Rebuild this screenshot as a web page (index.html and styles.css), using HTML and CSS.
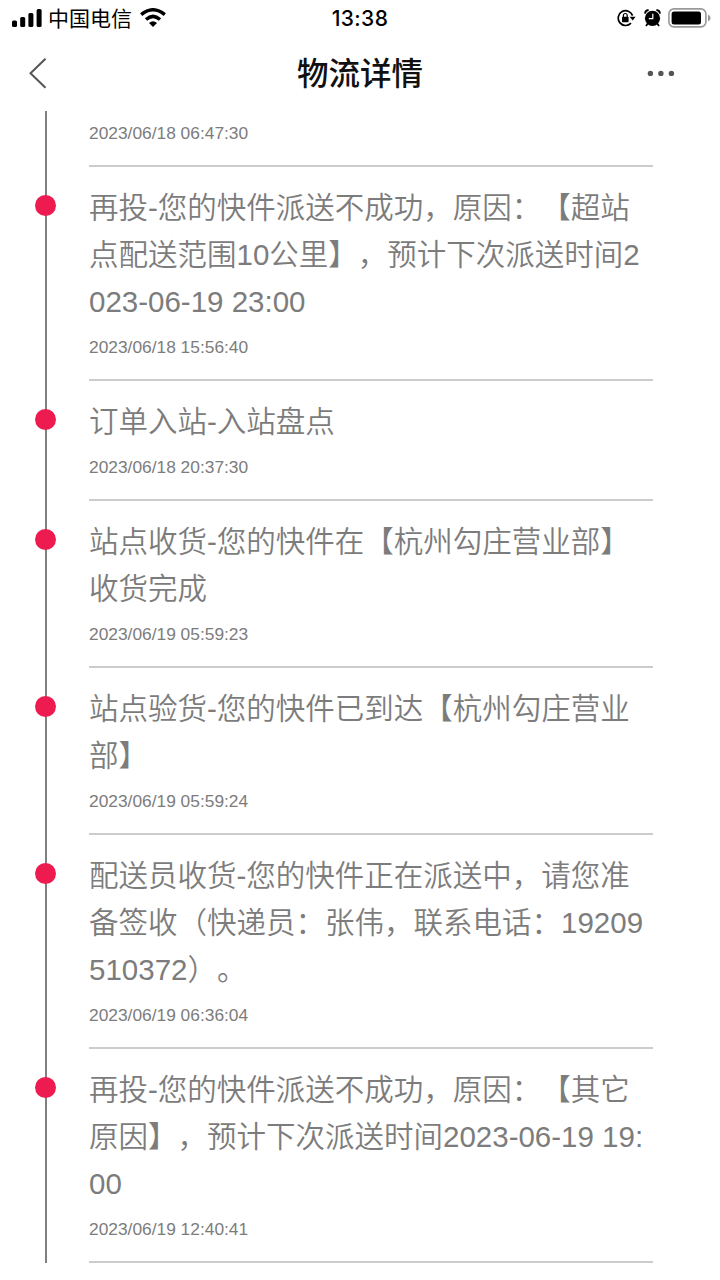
FILE: index.html
```html
<!DOCTYPE html>
<html lang="zh-CN">
<head>
<meta charset="utf-8">
<title>物流详情</title>
<link rel="stylesheet" href="styles.css">
</head>
<body>
<div class="status">
  <div class="status-left">
    <svg class="signal" width="31" height="20" viewBox="0 0 31 20"><rect x="0" y="12.5" width="5" height="6.5" rx="1.5"/><rect x="8.2" y="9" width="5" height="10" rx="1.5"/><rect x="16.4" y="5" width="5" height="14" rx="1.5"/><rect x="24.6" y="1" width="5" height="18" rx="1.5"/></svg>
    <span class="carrier">中国电信</span>
    <svg class="wifi" width="26" height="20" viewBox="0 0 26 20"><path d="M1.2 6.7Q13 -3.1 24.8 6.7M6 11.5Q13 5.3 20 11.5" fill="none" stroke="#000" stroke-width="3.5"/><path d="M9 14.9Q13 11.5 17 14.9L13 18.9Z"/></svg>
  </div>
  <div class="clock">13:38</div>
  <div class="status-right">
    <svg class="lock" width="19" height="18" viewBox="0 0 19 18"><path d="M14 14.2A7.4 7.4 0 1 1 15.6 6.6" fill="none" stroke="#000" stroke-width="1.7"/><path d="M12.6 7.8H18.6L15.7 11.6Z"/><rect x="5" y="7.8" width="6.6" height="5.4" rx=".6"/><path d="M6.4 8V6.4a1.9 1.9 0 0 1 3.8 0V8" fill="none" stroke="#000" stroke-width="1.2"/></svg>
    <svg class="alarm" width="17" height="18" viewBox="0 0 17 18"><circle cx="8.5" cy="9.3" r="7.6"/><path d="M1 4.6Q1.2 1.4 4.6 1M12.4 1Q15.8 1.4 16 4.6" fill="none" stroke="#000" stroke-width="1.8"/><path d="M3.8 14.5L2 17M13.2 14.5L15 17" stroke="#000" stroke-width="1.8"/><path d="M8.8 4.8V9.7H4.8" fill="none" stroke="#fff" stroke-width="1.2"/></svg>
    <svg class="battery" width="43" height="20" viewBox="0 0 43 20"><rect x=".9" y=".9" width="37" height="18" rx="5" fill="none" stroke="#999" stroke-width="1.6"/><rect x="3.6" y="3.6" width="29.4" height="12.8" rx="2.5"/><path d="M40 6.6Q42.6 7.7 42.6 10T40 13.4Z" fill="#999"/></svg>
  </div>
</div>
<header class="nav">
  <svg class="back" width="20" height="34" viewBox="0 0 20 34"><path d="M17.5 1.8L2.5 16.3L17.5 30.8" fill="none" stroke="#555" stroke-width="2"/></svg>
  <h1 class="title">物流详情</h1>
  <svg class="more" width="28" height="10" viewBox="0 0 28 10"><circle cx="3.4" cy="4.4" r="2.7"/><circle cx="13.9" cy="4.4" r="2.7"/><circle cx="24.4" cy="4.4" r="2.7"/></svg>
</header>
<main class="timeline">
  <section class="event event-first"><time class="time">2023/06/18 06:47:30</time></section>
  <section class="event"><i class="dot"></i><p class="text">再投-您的快件派送不成功，原因：【超站<br>点配送范围10公里】，预计下次派送时间2<br>023-06-19 23:00</p><time class="time">2023/06/18 15:56:40</time></section>
  <section class="event"><i class="dot"></i><p class="text">订单入站-入站盘点</p><time class="time">2023/06/18 20:37:30</time></section>
  <section class="event"><i class="dot"></i><p class="text">站点收货-您的快件在【杭州勾庄营业部】<br>收货完成</p><time class="time">2023/06/19 05:59:23</time></section>
  <section class="event"><i class="dot"></i><p class="text">站点验货-您的快件已到达【杭州勾庄营业<br>部】</p><time class="time">2023/06/19 05:59:24</time></section>
  <section class="event"><i class="dot"></i><p class="text">配送员收货-您的快件正在派送中，请您准<br>备签收（快递员：张伟，联系电话：19209<br>510372）。</p><time class="time">2023/06/19 06:36:04</time></section>
  <section class="event"><i class="dot"></i><p class="text">再投-您的快件派送不成功，原因：【其它<br>原因】，预计下次派送时间2023-06-19 19:<br>00</p><time class="time">2023/06/19 12:40:41</time></section>
</main>
</body>
</html>
```
FILE: styles.css
```css
* { box-sizing: border-box; }
body {
  margin: 0;
  width: 720px;
  height: 1280px;
  overflow: hidden;
  background: #fff;
  color: #7c7c7c;
  font-family: "Liberation Sans", "Noto Sans CJK SC", sans-serif;
  text-spacing-trim: space-all;
}
svg { display: block; flex: none; }
.status {
  display: grid;
  grid-template-columns: 1fr auto 1fr;
  align-items: center;
  height: 36px;
  padding: 0 9px 0 12px;
  color: #000;
}
.status-left, .status-right { display: flex; align-items: center; }
.status-right { justify-content: flex-end; }
.carrier { margin: 1px 8px 0 5px; font-size: 21px; line-height: 35px; }
.clock { margin-right: 3px; padding-top: 1px; font: 500 21px/35px Inter, sans-serif; letter-spacing: .4px; }
.lock { margin-right: 8px; }
.alarm { margin-right: 7px; }
.nav {
  display: grid;
  grid-template-columns: 1fr auto 1fr;
  align-items: center;
  height: 75px;
  padding: 0 45px 0 28px;
}
.title {
  margin: 0 0 5px 17px;
  color: #111;
  font: 500 31.5px/70px "Noto Sans CJK SC", sans-serif;
}
.more { justify-self: end; fill: #555; }
.timeline {
  position: relative;
  height: 1152px;
  padding: 0 67px 0 89px;
}
.timeline::before {
  content: "";
  position: absolute;
  left: 45px;
  top: 0;
  width: 2px;
  height: 1152px;
  background: #808080;
}
.event {
  position: relative;
  padding: 17px 0 19px;
  border-bottom: 2px solid #ccc;
}
.text { margin: 0; font-size: 29.5px; line-height: 47px; white-space: nowrap; font-weight: 350; }
.time { display: block; margin-top: 9px; font-size: 17.35px; line-height: 26px; }
.event-first { padding-top: 9px; }
.event-first .time { margin-top: 0; }
.dot {
  position: absolute;
  left: -54px;
  top: 28px;
  width: 21px;
  height: 21px;
  border-radius: 50%;
  background: #ed1b50;
}
```
